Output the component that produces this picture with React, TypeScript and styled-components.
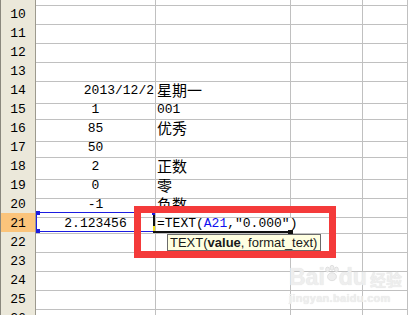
import React from 'react';
import styled, { createGlobalStyle } from 'styled-components';

const GlobalStyle = createGlobalStyle`
  html, body {
    margin: 0;
    padding: 0;
    background: #ffffff;
    overflow: hidden;
  }
`;

const Sheet = styled.div`
  position: relative;
  width: 408px;
  height: 315px;
  overflow: hidden;
  background: #ffffff;
  font-family: 'Liberation Mono', 'Noto Sans CJK SC', monospace;
  font-size: 13px;
  color: #000;
`;

const Grid = styled.div`
  margin-top: -15px;
  display: flex;
  flex-direction: column;
`;

const Row = styled.div`
  display: grid;
  grid-template-columns: 36px 120px 135px 72px 1fr;
  height: 19px;
`;

const RowHeader = styled.div<{ $active?: boolean }>`
  box-sizing: border-box;
  border-left: 1px solid #8a887e;
  border-right: 1px solid #9d9a8e;
  border-bottom: 1px solid #b3b0a3;
  background: ${({ $active }) => ($active ? '#fbc47b' : '#ebe8da')};
  text-align: center;
  line-height: 18px;
  padding-top: 2px;
`;

const Cell = styled.div<{ $align?: 'left' | 'center' | 'right'; $overflow?: boolean }>`
  box-sizing: border-box;
  border-right: ${({ $overflow }) => ($overflow ? '1px solid transparent' : '1px solid #c0c0c0')};
  border-bottom: 1px solid #c0c0c0;
  text-align: ${({ $align }) => $align || 'left'};
  line-height: 18px;
  padding: 2px 1px 0 1px;
  white-space: nowrap;
  overflow: visible;
  position: relative;
  z-index: ${({ $overflow }) => ($overflow ? 1 : 0)};
`;

const Cjk = styled.span`
  font-family: 'Noto Sans CJK SC', sans-serif;
  font-size: 15px;
  position: relative;
  top: -1px;
`;

const RefText = styled.span`
  color: #1010f0;
`;

const RefBox = styled.div`
  position: absolute;
  left: 36px;
  top: 212px;
  width: 118px;
  height: 20px;
  box-sizing: border-box;
  border: 1px solid #1c1ce0;
  border-right: none;

  &::before,
  &::after {
    content: '';
    position: absolute;
    left: -1px;
    width: 4px;
    height: 4px;
    background: #1c1ce0;
  }
  &::before {
    top: -2px;
  }
  &::after {
    bottom: -2px;
  }
`;

const ActiveCell = styled.div`
  position: absolute;
  left: 153px;
  top: 212px;
  width: 138px;
  height: 21px;
  box-sizing: border-box;
  border-left: 2px solid #111;
  border-bottom: 2px solid #111;
  z-index: 2;

  &::before {
    content: '';
    position: absolute;
    left: -3px;
    top: 0;
    width: 3px;
    height: 3px;
    background: #1c1ce0;
  }
  &::after {
    content: '';
    position: absolute;
    left: -2px;
    bottom: 0;
    width: 2px;
    height: 5px;
    background: #f5e21a;
  }
`;

const FillHandle = styled.div`
  position: absolute;
  left: 288px;
  top: 230px;
  width: 5px;
  height: 4px;
  background: #111;
  z-index: 2;
`;

const Tooltip = styled.div`
  position: absolute;
  left: 167px;
  top: 234px;
  width: 154px;
  height: 17px;
  box-sizing: border-box;
  border: 1px solid #6b6b6b;
  background: #ffffe1;
  font-family: 'Liberation Sans', Arial, sans-serif;
  font-size: 13px;
  line-height: 15px;
  padding-left: 2px;
  color: #1a1a1a;
  white-space: nowrap;
  z-index: 3;

  b {
    font-weight: bold;
  }
`;

const Highlight = styled.div`
  position: absolute;
  left: 134px;
  top: 206px;
  width: 202px;
  height: 52px;
  box-sizing: border-box;
  border: 7px solid #f43a3a;
  z-index: 4;
`;

const Watermark = styled.div`
  position: absolute;
  left: 289px;
  top: 265px;
  display: flex;
  flex-direction: column;
  align-items: flex-start;
  color: #eeeeee;
  text-shadow: 0 0 1px #dddddd;
  font-family: 'Liberation Sans', Arial, sans-serif;
  font-weight: bold;
  pointer-events: none;
  z-index: 1;
`;

const Logo = styled.div`
  display: flex;
  align-items: center;
  height: 24px;
  font-size: 23px;
  line-height: 24px;
`;

const LogoCjk = styled.span`
  font-family: 'Noto Sans CJK SC', sans-serif;
  font-size: 16px;
  line-height: 20px;
  margin-left: 3px;
  margin-top: 4px;
`;

const Domain = styled.div`
  font-size: 11px;
  line-height: 12px;
  margin-top: 3px;
  letter-spacing: 0.3px;
`;

type RowData = {
  n: number;
  a?: string;
  aAlign?: 'left' | 'center' | 'right';
  b?: string;
  cjk?: boolean;
  formula?: boolean;
};

const rows: RowData[] = [
  { n: 9 },
  { n: 10 },
  { n: 11 },
  { n: 12 },
  { n: 13 },
  { n: 14, a: '2013/12/2', aAlign: 'right', b: '星期一', cjk: true },
  { n: 15, a: '1', b: '001' },
  { n: 16, a: '85', b: '优秀', cjk: true },
  { n: 17, a: '50' },
  { n: 18, a: '2', b: '正数', cjk: true },
  { n: 19, a: '0', b: '零', cjk: true },
  { n: 20, a: '-1', b: '负数', cjk: true },
  { n: 21, a: '2.123456', formula: true },
  { n: 22 },
  { n: 23 },
  { n: 24 },
  { n: 25 },
  { n: 26 },
];

const Paw: React.FC = () => (
  <svg width="16" height="18" viewBox="0 0 18 20" style={{ margin: '-6px -1px 0' }}>
    <g fill="#eeeeee" stroke="#d8d8d8" strokeWidth="0.8">
      <ellipse cx="4" cy="5" rx="2.2" ry="2.8" />
      <ellipse cx="9" cy="3" rx="2.2" ry="2.8" />
      <ellipse cx="14" cy="5" rx="2.2" ry="2.8" />
      <ellipse cx="9" cy="13" rx="5" ry="4.5" />
    </g>
  </svg>
);

const App: React.FC = () => {
  return (
    <>
      <GlobalStyle />
      <Sheet>
        <Grid>
          {rows.map((r) => (
            <Row key={r.n}>
              <RowHeader $active={r.n === 21}>{r.n}</RowHeader>
              <Cell $align={r.aAlign || 'center'}>{r.a}</Cell>
              <Cell $overflow={r.formula}>
                {r.formula ? (
                  <>
                    =TEXT(<RefText>A21</RefText>,"0.000")
                  </>
                ) : r.cjk ? (
                  <Cjk>{r.b}</Cjk>
                ) : (
                  r.b
                )}
              </Cell>
              <Cell />
              <Cell />
            </Row>
          ))}
        </Grid>

        <RefBox />
        <ActiveCell />
        <FillHandle />
        <Tooltip>
          TEXT(<b>value</b>, format_text)
        </Tooltip>
        <Highlight />

        <Watermark>
          <Logo>
            Bai
            <Paw />
            du
            <LogoCjk>经验</LogoCjk>
          </Logo>
          <Domain>jingyan.baidu.com</Domain>
        </Watermark>
      </Sheet>
    </>
  );
};

export default App;
